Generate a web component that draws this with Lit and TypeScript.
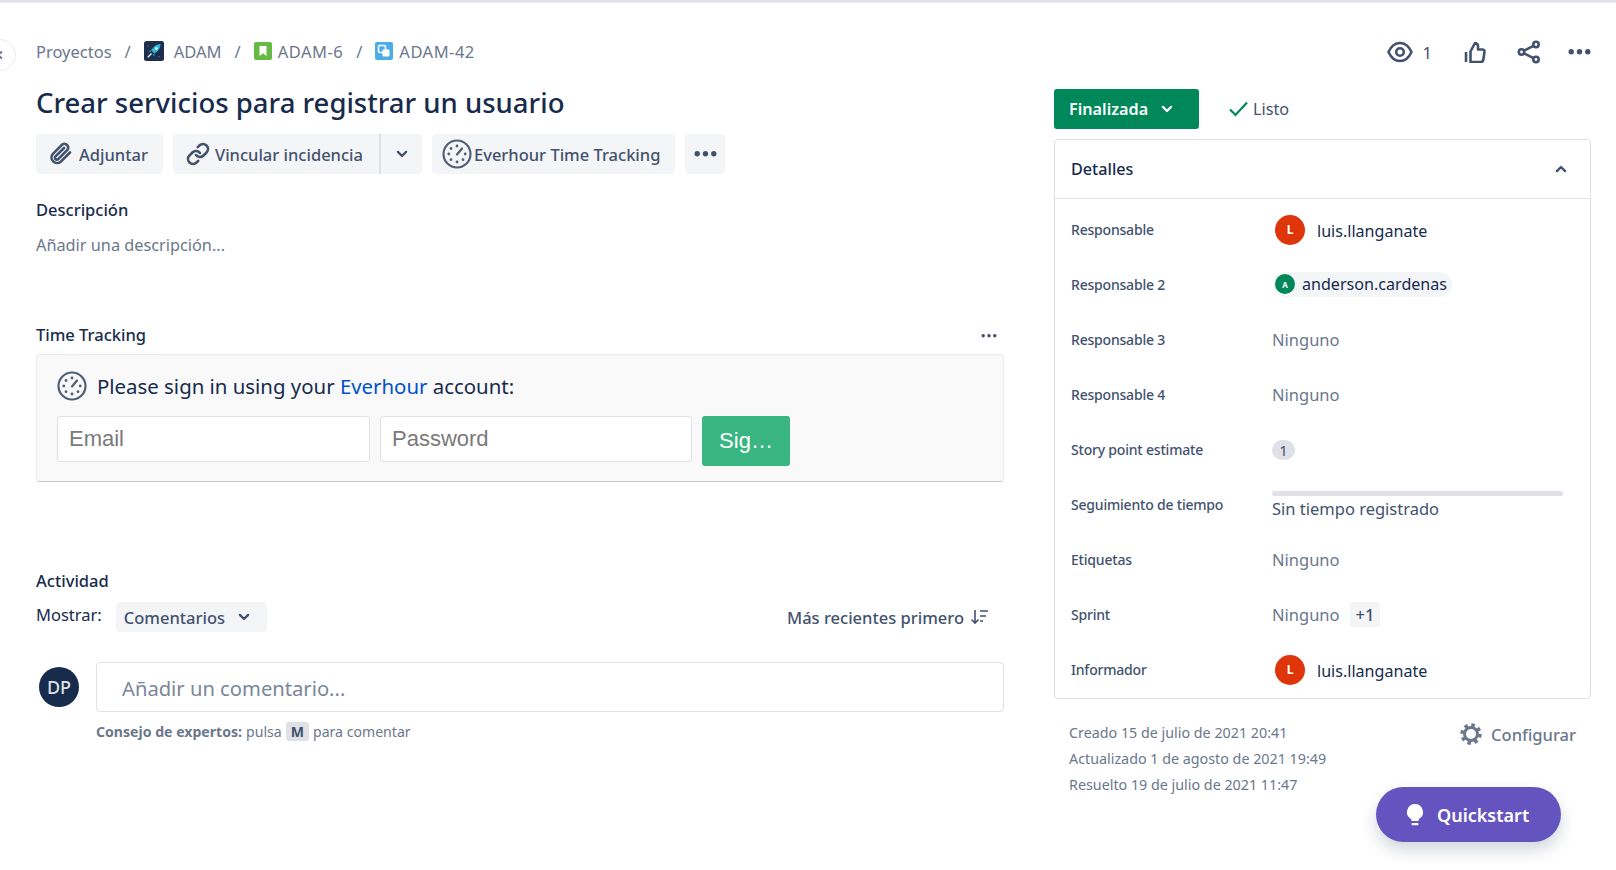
import { LitElement, html, css, svg } from 'lit';
import { customElement } from 'lit/decorators.js';

const everhourIcon = (size: number) => html`
  <svg width=${size} height=${size} viewBox="0 0 30 30" fill="none">
    <circle cx="15" cy="15" r="13.5" stroke="#505f79" stroke-width="2.2"></circle>
    <path d="M15 15.5l5-6" stroke="#505f79" stroke-width="2.2" stroke-linecap="round"></path>
    <g fill="#505f79">
      <circle cx="15" cy="7" r="1.4"></circle><circle cx="9" cy="9.5" r="1.4"></circle>
      <circle cx="6.8" cy="15" r="1.4"></circle><circle cx="9" cy="20.7" r="1.4"></circle>
      <circle cx="15" cy="23" r="1.4"></circle><circle cx="21" cy="20.7" r="1.4"></circle>
      <circle cx="23.2" cy="15" r="1.4"></circle>
    </g>
  </svg>`;

const chevron = (size = 14, color = '#42526e', up = false) => html`
  <svg width=${size} height=${size} viewBox="0 0 12 12" fill="none">
    <path d=${up ? 'M2.5 7.8L6 4.3l3.5 3.5' : 'M2.5 4.2L6 7.7l3.5-3.5'} stroke=${color} stroke-width="2" stroke-linecap="round" stroke-linejoin="round"></path>
  </svg>`;

const dots = (width: number, r: number, color = '#42526e') => html`
  <svg width=${width} height=${r * 2 + 2} viewBox="0 0 ${width} ${r * 2 + 2}">
    ${[r + 0.5, width / 2, width - r - 0.5].map((cx) => svg`<circle cx=${cx} cy=${r + 1} r=${r} fill=${color}></circle>`)}
  </svg>`;

interface DetailRow {
  label: string;
  kind: 'user' | 'pill' | 'none' | 'points' | 'time' | 'sprint';
  value?: string;
}

const ROWS: DetailRow[] = [
  { label: 'Responsable', kind: 'user', value: 'luis.llanganate' },
  { label: 'Responsable 2', kind: 'pill', value: 'anderson.cardenas' },
  { label: 'Responsable 3', kind: 'none' },
  { label: 'Responsable 4', kind: 'none' },
  { label: 'Story point estimate', kind: 'points', value: '1' },
  { label: 'Seguimiento de tiempo', kind: 'time' },
  { label: 'Etiquetas', kind: 'none' },
  { label: 'Sprint', kind: 'sprint' },
  { label: 'Informador', kind: 'user', value: 'luis.llanganate' },
];

@customElement('app-root')
export class AppRoot extends LitElement {
  static styles = css`
    :host {
      display: block;
      position: relative;
      width: 1616px;
      height: 870px;
      overflow: hidden;
      background: #fff;
      font-family: 'Noto Sans', sans-serif;
      color: #172b4d;
      font-size: 16.5px;
    }

    .top-line {
      height: 2px;
      background: #dfe3e8;
      box-shadow: 0 1px 1px rgba(9, 30, 66, 0.08);
    }

    .page {
      display: flex;
      padding: 34px 25px 0 36px;
    }

    .left {
      width: 968px;
      flex: none;
    }

    .right {
      width: 537px;
      margin-left: 50px;
      flex: none;
    }

    .collapse {
      position: absolute;
      left: -16px;
      top: 39px;
      width: 30px;
      height: 30px;
      display: flex;
      align-items: center;
      justify-content: center;
      border-radius: 50%;
      border: 1px solid #ebecf0;
      background: #fff;
    }

    .crumbs {
      display: flex;
      align-items: center;
      height: 30px;
      color: #6b778c;
    }

    .sep {
      margin: 0 13px;
    }

    .key-text {
      letter-spacing: 0.5px;
    }

    .crumb-icon {
      display: block;
      margin-right: 6px;
    }

    .crumb-icon.project {
      margin-right: 10px;
    }

    h1 {
      margin: 18px 0 0;
      font-size: 27.5px;
      line-height: 38px;
      font-weight: 500;
      color: #172b4d;
    }

    .actions {
      display: flex;
      gap: 10px;
      margin-top: 12px;
    }

    .btn {
      display: flex;
      align-items: center;
      height: 40px;
      background: #f4f5f7;
      border-radius: 4px;
      color: #42526e;
      font-weight: 500;
      box-sizing: border-box;
    }

    .btn.attach {
      width: 127px;
      padding-left: 13px;
      gap: 6px;
    }

    .btn.link {
      width: 208px;
      padding-left: 13px;
      gap: 5px;
      border-radius: 4px 0 0 4px;
      border-right: 2px solid #dfe1e6;
    }

    .btn.link-more {
      width: 41px;
      margin-left: -10px;
      justify-content: center;
      border-radius: 0 4px 4px 0;
    }

    .btn.everhour {
      width: 243px;
      padding-left: 10px;
      gap: 2px;
    }

    .btn.more {
      width: 40px;
      justify-content: center;
    }

    .section-title {
      font-weight: 500;
      line-height: 24px;
    }

    .description {
      margin-top: 24px;
    }

    .placeholder {
      margin-top: 11px;
      line-height: 24px;
      font-size: 16.3px;
      color: #6b778c;
    }

    .tracking-head {
      display: flex;
      justify-content: space-between;
      align-items: center;
      margin-top: 66px;
    }

    .tracking-head svg {
      display: block;
      margin: 2px 7px 0 0;
    }

    .tracking {
      margin-top: 7px;
      height: 128px;
      box-sizing: border-box;
      padding: 16px 20px 0;
      background: #f9f9f9;
      border: 1px solid #ebecf0;
      border-bottom-color: #c1c7d0;
      border-radius: 4px;
    }

    .sign-in {
      display: flex;
      align-items: center;
      gap: 10px;
      font-size: 20.4px;
      color: #172b4d;
      height: 30px;
    }

    .sign-in a {
      color: #0052cc;
      text-decoration: none;
    }

    .form {
      display: flex;
      align-items: flex-start;
      gap: 10px;
      margin-top: 15px;
    }

    .input {
      height: 46px;
      box-sizing: border-box;
      padding: 8px 11px;
      border: 1px solid #dfe1e6;
      border-radius: 3px;
      background: #fff;
      font-family: 'Liberation Sans', sans-serif;
      font-size: 22px;
      line-height: 28px;
      color: #7a7a7a;
    }

    .input.email {
      width: 313px;
    }

    .input.password {
      width: 312px;
    }

    .submit {
      width: 88px;
      height: 50px;
      display: flex;
      align-items: center;
      justify-content: center;
      border-radius: 3px;
      background: #38b580;
      color: #fff;
      font-family: 'Liberation Sans', sans-serif;
      font-size: 22px;
    }

    .activity {
      margin-top: 87px;
    }

    .show-row {
      display: flex;
      align-items: flex-start;
      margin-top: 9px;
      height: 30px;
    }

    .show-label {
      line-height: 26px;
    }

    .select {
      display: flex;
      align-items: center;
      gap: 12px;
      margin-left: 14px;
      height: 30px;
      width: 151px;
      box-sizing: border-box;
      padding-left: 8px;
      border-radius: 4px;
      background: #f4f5f7;
      color: #42526e;
      font-weight: 500;
    }

    .sort {
      display: flex;
      align-items: center;
      gap: 6px;
      margin-left: auto;
      margin-right: 16px;
      height: 30px;
      color: #42526e;
      font-weight: 500;
    }

    .comment-row {
      display: flex;
      gap: 17px;
      margin-top: 30px;
    }

    .me {
      width: 40px;
      height: 40px;
      margin: 5px 0 0 3px;
      flex: none;
      display: flex;
      align-items: center;
      justify-content: center;
      border-radius: 50%;
      background: #172b4d;
      color: #dfe1e6;
      font-size: 18px;
      font-weight: 500;
    }

    .comment {
      flex: 1;
      height: 50px;
      box-sizing: border-box;
      padding: 2px 0 0 25px;
      display: flex;
      align-items: center;
      border: 1px solid #dfe1e6;
      border-radius: 4px;
      font-size: 20.2px;
      color: #7a869a;
    }

    .tip {
      display: flex;
      align-items: center;
      margin: 8px 0 0 60px;
      height: 22px;
      font-size: 14.1px;
      color: #6b778c;
    }

    .tip strong {
      font-weight: 700;
      margin-right: 4px;
    }

    .key {
      margin: 0 4px;
      padding: 0 5px;
      line-height: 19px;
      border-radius: 3px;
      background: #dfe1e6;
      color: #42526e;
      font-weight: 700;
    }

    .social {
      display: flex;
      align-items: center;
      height: 30px;
      margin-top: 1px;
    }

    .social svg {
      display: block;
    }

    .spacer {
      flex: 1;
    }

    .watch-count {
      margin: 0 32px 0 10px;
      color: #42526e;
    }

    .share {
      margin-left: 31px;
    }

    .social-more {
      margin-left: 27px;
    }

    .status-row {
      display: flex;
      align-items: center;
      margin-top: 22px;
    }

    .status {
      display: flex;
      align-items: center;
      gap: 12px;
      width: 145px;
      height: 40px;
      box-sizing: border-box;
      padding-left: 15px;
      border-radius: 3px;
      background: #00875a;
      color: #fff;
      font-weight: 600;
      font-size: 16.2px;
    }

    .resolution {
      display: flex;
      align-items: center;
      gap: 5px;
      margin-left: 30px;
      color: #42526e;
      font-size: 16.2px;
    }

    .details {
      width: 537px;
      box-sizing: border-box;
      margin-top: 10px;
      border: 1px solid #dfe1e6;
      border-radius: 4px;
      height: 560px;
    }

    .details-head {
      display: flex;
      align-items: center;
      justify-content: space-between;
      height: 59px;
      box-sizing: border-box;
      padding: 0 22px 0 16px;
      border-bottom: 1px solid #dfe1e6;
      font-weight: 500;
      font-size: 16.2px;
    }

    .rows {
      display: flex;
      flex-direction: column;
      padding-top: 3px;
    }

    .row {
      display: flex;
      align-items: center;
      height: 55px;
      padding-left: 16px;
    }

    .row-label {
      width: 201px;
      flex: none;
      font-size: 14px;
      letter-spacing: -0.2px;
      font-weight: 500;
      color: #42526e;
    }

    .user {
      display: flex;
      align-items: center;
      gap: 12px;
      margin-left: 3px;
      font-size: 16.1px;
    }

    .user-name {
      padding-top: 2px;
    }

    .avatar {
      width: 30px;
      height: 30px;
      border-radius: 50%;
      background: #de350b;
      color: #fff;
      display: flex;
      align-items: center;
      justify-content: center;
      font-size: 12px;
      font-weight: 700;
    }

    .pill {
      display: flex;
      align-items: center;
      gap: 7px;
      height: 25px;
      padding: 0 5px 0 2px;
      margin: 0 0 1px 1px;
      border-radius: 13px;
      background: #f4f5f7;
      font-size: 16.1px;
    }

    .pill .avatar {
      width: 20px;
      height: 20px;
      font-size: 8px;
      background: #00875a;
    }

    .none {
      color: #6b778c;
    }

    .points {
      width: 23px;
      height: 20px;
      line-height: 20px;
      text-align: center;
      border-radius: 10px;
      background: #dfe1e6;
      font-size: 15px;
      color: #42526e;
    }

    .time {
      width: 291px;
      margin-top: 2px;
    }

    .bar {
      height: 5px;
      border-radius: 2px;
      background: #dfe1e6;
    }

    .time-text {
      margin-top: 1px;
      line-height: 24px;
      color: #42526e;
    }

    .extra {
      margin-left: 10px;
      padding: 0 6px;
      line-height: 25px;
      border-radius: 3px;
      background: #f4f5f7;
      color: #42526e;
      font-weight: 500;
    }

    .foot {
      display: flex;
      justify-content: space-between;
      padding: 21px 15px 0 15px;
    }

    .dates {
      font-size: 14.3px;
      line-height: 26px;
      color: #6b778c;
    }

    .configure {
      display: flex;
      align-items: center;
      gap: 9px;
      height: 30px;
      margin-top: -1px;
      color: #6b778c;
      font-weight: 500;
    }

    .quickstart {
      position: absolute;
      left: 1376px;
      top: 787px;
      width: 185px;
      height: 55px;
      display: flex;
      align-items: center;
      gap: 13px;
      box-sizing: border-box;
      padding-left: 30px;
      border-radius: 28px;
      background: #6554c0;
      color: #fff;
      font-size: 18px;
      font-weight: 600;
      box-shadow: 0 8px 16px rgba(9, 30, 66, 0.18);
    }
  `;

  private _renderValue(row: DetailRow) {
    switch (row.kind) {
      case 'user':
        return html`<div class="user"><span class="avatar">L</span><span class="user-name">${row.value}</span></div>`;
      case 'pill':
        return html`<div class="pill"><span class="avatar">A</span><span>${row.value}</span></div>`;
      case 'points':
        return html`<div class="points">${row.value}</div>`;
      case 'time':
        return html`<div class="time">
          <div class="bar"></div>
          <div class="time-text">Sin tiempo registrado</div>
        </div>`;
      case 'sprint':
        return html`<span class="none">Ninguno</span><span class="extra">+1</span>`;
      default:
        return html`<span class="none">Ninguno</span>`;
    }
  }

  render() {
    return html`
      <div class="top-line"></div>
      <div class="collapse">
        <svg width="12" height="12" viewBox="0 0 12 12" fill="none">
          <path d="M8 2.500L4 6l4 3.500" stroke="#6b778c" stroke-width="2"></path>
        </svg>
      </div>
      <div class="page">
        <div class="left">
          <div class="crumbs">
            <span>Proyectos</span><span class="sep">/</span>
            <svg class="crumb-icon project" width="20" height="20" viewBox="0 0 20 20">
              <rect width="20" height="20" rx="2.500" fill="#1d2f4c"></rect>
              <path d="M16.500 3c-4 .2-7.300 2.600-9.200 6.500l3 3c3.800-1.900 6.200-5.300 6.200-9.500z" fill="#2fb5d8"></path>
              <path d="M7.600 8.800L4.500 10l2 1.500zM11 12.300L9.900 15.500l-1.500-2z" fill="#1f8fb5"></path>
              <path d="M7.500 12.500L3.800 16.300" stroke="#e8f6fb" stroke-width="1.300"></path>
              <circle cx="12.300" cy="7.600" r="1.300" fill="#fff"></circle>
              <circle cx="4" cy="5" r="0.500" fill="#8fa3bf"></circle>
              <circle cx="15" cy="15.500" r="0.500" fill="#8fa3bf"></circle>
            </svg>
            <span>ADAM</span><span class="sep">/</span>
            <svg class="crumb-icon" width="18" height="18" viewBox="0 0 18 18">
              <rect width="18" height="18" rx="2" fill="#65ba43"></rect>
              <path d="M5.500 4h7v10L9 11.200 5.500 14z" fill="#fff"></path>
            </svg>
            <span class="key-text">ADAM-6</span><span class="sep">/</span>
            <svg class="crumb-icon" width="18" height="18" viewBox="0 0 18 18">
              <rect width="18" height="18" rx="2" fill="#4bade8"></rect>
              <rect x="3.500" y="3.500" width="7" height="7" rx="1.200" fill="none" stroke="#fff" stroke-width="1.600"></rect>
              <rect x="7.500" y="7.500" width="7" height="7" rx="1.200" fill="#fff"></rect>
            </svg>
            <span class="key-text">ADAM-42</span>
          </div>
          <h1>Crear servicios para registrar un usuario</h1>
          <div class="actions">
            <div class="btn attach">
              <svg width="24" height="24" viewBox="0 0 24 24" fill="none" stroke="#42526e" stroke-width="2.600" stroke-linecap="round" stroke-linejoin="round">
                <path d="M21 10.500l-9.200 9.200a5.600 5.600 0 0 1-7.900-7.900l9.200-9.200a3.800 3.800 0 0 1 5.300 5.300l-9.200 9.200a1.900 1.900 0 0 1-2.700-2.700l8.500-8.400"></path>
              </svg>
              <span>Adjuntar</span>
            </div>
            <div class="btn link">
              <svg width="24" height="24" viewBox="0 0 24 24" fill="none" stroke="#42526e" stroke-width="2.600" stroke-linecap="round" stroke-linejoin="round">
                <path d="M10 13a5 5 0 0 0 7.540.540l3-3a5 5 0 0 0-7.070-7.070l-1.720 1.710"></path>
                <path d="M14 11a5 5 0 0 0-7.540-.540l-3 3a5 5 0 0 0 7.070 7.070l1.710-1.710"></path>
              </svg>
              <span>Vincular incidencia</span>
            </div>
            <div class="btn link-more">${chevron()}</div>
            <div class="btn everhour">${everhourIcon(30)}<span>Everhour Time Tracking</span></div>
            <div class="btn more">${dots(23, 2.7)}</div>
          </div>
          <div class="section-title description">Descripción</div>
          <div class="placeholder">Añadir una descripción...</div>
          <div class="section-title tracking-head"><span>Time Tracking</span>${dots(16, 1.7)}</div>
          <div class="tracking">
            <div class="sign-in">
              ${everhourIcon(30)}
              <span>Please sign in using your <a>Everhour</a> account:</span>
            </div>
            <div class="form">
              <div class="input email">Email</div>
              <div class="input password">Password</div>
              <div class="submit">Sig…</div>
            </div>
          </div>
          <div class="section-title activity">Actividad</div>
          <div class="show-row">
            <span class="show-label">Mostrar:</span>
            <div class="select"><span>Comentarios</span>${chevron()}</div>
            <div class="sort">
              <span>Más recientes primero</span>
              <svg width="18" height="16" viewBox="0 0 18 16" fill="none" stroke="#42526e" stroke-width="1.600">
                <path d="M5 1v13M1.500 10.500L5 14l3.500-3.500M10 2h8M10 7h6M10 12h3"></path>
              </svg>
            </div>
          </div>
          <div class="comment-row">
            <div class="me">DP</div>
            <div class="comment">Añadir un comentario...</div>
          </div>
          <div class="tip">
            <strong>Consejo de expertos:</strong> pulsa <span class="key">M</span> para comentar
          </div>
        </div>
        <div class="right">
          <div class="social">
            <div class="spacer"></div>
            <svg width="26" height="22" viewBox="0 0 26 22" fill="none" stroke="#42526e" stroke-width="2.600">
              <path d="M1.500 11C4 5.500 8 2 13 2s9 3.500 11.500 9C22 16.500 18 20 13 20S4 16.500 1.500 11z"></path>
              <circle cx="13" cy="11" r="3.800"></circle>
            </svg>
            <span class="watch-count">1</span>
            <svg width="22" height="22" viewBox="0 0 22 22" fill="none" stroke="#42526e" stroke-width="2.600" stroke-linejoin="round">
              <path d="M2 11v10M6.500 21V10.500L11 2c2 .2 3 1.500 3 3.500V8.500h4.500c1.300 0 2.200 1 2 2.300l-1.200 8c-.2 1.300-1.200 2.200-2.500 2.200z"></path>
            </svg>
            <svg class="share" width="24" height="24" viewBox="0 0 24 24" fill="none" stroke="#42526e" stroke-width="2.600">
              <circle cx="19" cy="4.500" r="2.700"></circle><circle cx="4.500" cy="12" r="2.700"></circle><circle cx="19" cy="19.500" r="2.700"></circle>
              <path d="M7 10.700l9.500-4.900M7 13.300l9.500 4.900"></path>
            </svg>
            <span class="social-more">${dots(23, 2.7)}</span>
          </div>
          <div class="status-row">
            <div class="status"><span>Finalizada</span>${chevron(14, '#fff')}</div>
            <div class="resolution">
              <svg width="19" height="16" viewBox="0 0 19 16" fill="none" stroke="#00875a" stroke-width="2.200">
                <path d="M1 8.500l5.500 5.500L18 1.500"></path>
              </svg>
              <span>Listo</span>
            </div>
          </div>
          <div class="details">
            <div class="details-head"><span>Detalles</span>${chevron(14, '#42526e', true)}</div>
            <div class="rows">
              ${ROWS.map((row) => html`
                <div class="row">
                  <div class="row-label">${row.label}</div>
                  ${this._renderValue(row)}
                </div>
              `)}
            </div>
          </div>
          <div class="foot">
            <div class="dates">
              <div>Creado 15 de julio de 2021 20:41</div>
              <div>Actualizado 1 de agosto de 2021 19:49</div>
              <div>Resuelto 19 de julio de 2021 11:47</div>
            </div>
            <div class="configure">
              <svg width="22" height="22" viewBox="0 0 22 22" fill="none" stroke="#6b778c">
                <circle cx="11" cy="11" r="6.500" stroke-width="3"></circle>
                <circle cx="11" cy="11" r="9" stroke-width="3.500" stroke-dasharray="3.500 3.570"></circle>
              </svg>
              <span>Configurar</span>
            </div>
          </div>
        </div>
      </div>
      <div class="quickstart">
        <svg width="18" height="24" viewBox="0 0 18 24" fill="#fff">
          <path d="M9 1a8 8 0 0 0-4.500 14.600c.6.500 1 1.200 1 2v.400h7v-.400c0-.800.400-1.500 1-2A8 8 0 0 0 9 1z"></path>
          <rect x="5.500" y="20" width="7" height="2.200" rx="1"></rect>
        </svg>
        <span>Quickstart</span>
      </div>
    `;
  }
}

declare global {
  interface HTMLElementTagNameMap {
    'app-root': AppRoot;
  }
}
